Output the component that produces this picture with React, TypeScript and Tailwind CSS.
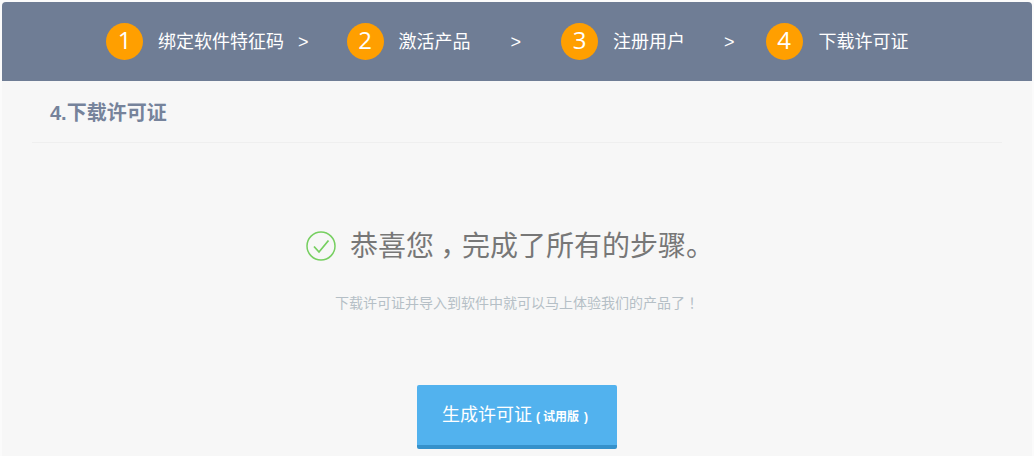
const FONT = "font-['Liberation_Sans','Noto_Sans_CJK_SC',sans-serif]";
const PUNCT = "font-['Noto_Sans_CJK_TC',sans-serif]";

const steps = [
  { num: "1", label: "绑定软件特征码", arrowGap: "ml-[14px]", nextGap: "mr-[38px]" },
  { num: "2", label: "激活产品", arrowGap: "ml-[40px]", nextGap: "mr-[40px]" },
  { num: "3", label: "注册用户", arrowGap: "ml-[39px]", nextGap: "mr-[31px]" },
];

function Circle({ num }: { num: string }) {
  return (
    <span className="flex h-[37px] w-[37px] shrink-0 items-center justify-center rounded-full bg-[#ff9f00] pb-[3px] font-['Open_Sans',sans-serif] text-[24px] leading-none text-white">
      {num}
    </span>
  );
}

export default function App() {
  return (
    <div className={`h-[456px] w-[1034px] overflow-hidden bg-[#fbfbfb] ${FONT}`}>
      <div className="mx-[2px] mt-[2px] h-[454px] w-[1030px] bg-[#f7f7f7]">
        {/* STEPS */}
        <div className="flex h-[79px] items-center rounded-t-[4px] bg-[#6f7d95] pl-[104px] text-[18px] text-white">
          {steps.map((s) => (
            <div key={s.num} className="flex items-center">
              <Circle num={s.num} />
              <span className="ml-[15px] leading-none">{s.label}</span>
              <span className={`${s.arrowGap} ${s.nextGap} leading-none`}>&gt;</span>
            </div>
          ))}
          <Circle num="4" />
          <span className="ml-[16px] leading-none">下载许可证</span>
        </div>

        {/* TITLE */}
        <div className="mx-[30px] flex h-[62px] items-center border-b border-[#efefef] pt-[2px] pl-[18px] text-[20px] font-bold text-[#76839b]">
          4.下载许可证
        </div>

        {/* RESULT */}
        <div className="mt-[87px] flex items-center justify-center pr-[14px]">
          <svg width="30" height="30" viewBox="0 0 30 30" fill="none" className="mr-[14px]">
            <circle cx="15" cy="15" r="14" stroke="#76cf60" strokeWidth="1.5" />
            <path d="M8 15.5 L13 21 L22.5 9.5" stroke="#76cf60" strokeWidth="1.8" />
          </svg>
          <span className="text-[28px] leading-none text-[#777777]">
            恭喜您<span className={`${PUNCT} inline-block translate-y-[8px] -translate-x-[1px]`}>，</span>完成了所有的步骤。
          </span>
        </div>
        <p className="mt-[34px] text-center text-[14px] leading-none text-[#b5bfc6]">
          下载许可证并导入到软件中就可以马上体验我们的产品了<span className={PUNCT}>！</span>
        </p>

        {/* BUTTON */}
        <div className="mt-[75px] flex justify-center">
          <button className="flex h-[64px] w-[200px] items-center justify-center rounded-[2px] border-b-[4px] border-[#3591cb] bg-[#52b2ee] pr-[4px] text-[18px] text-white">
            生成许可证
            <span className="ml-[4px] mt-[4px] text-[12px] font-bold">
              (<span className="ml-[3px] mr-[5px]">试用版</span>)
            </span>
          </button>
        </div>
      </div>
    </div>
  );
}
